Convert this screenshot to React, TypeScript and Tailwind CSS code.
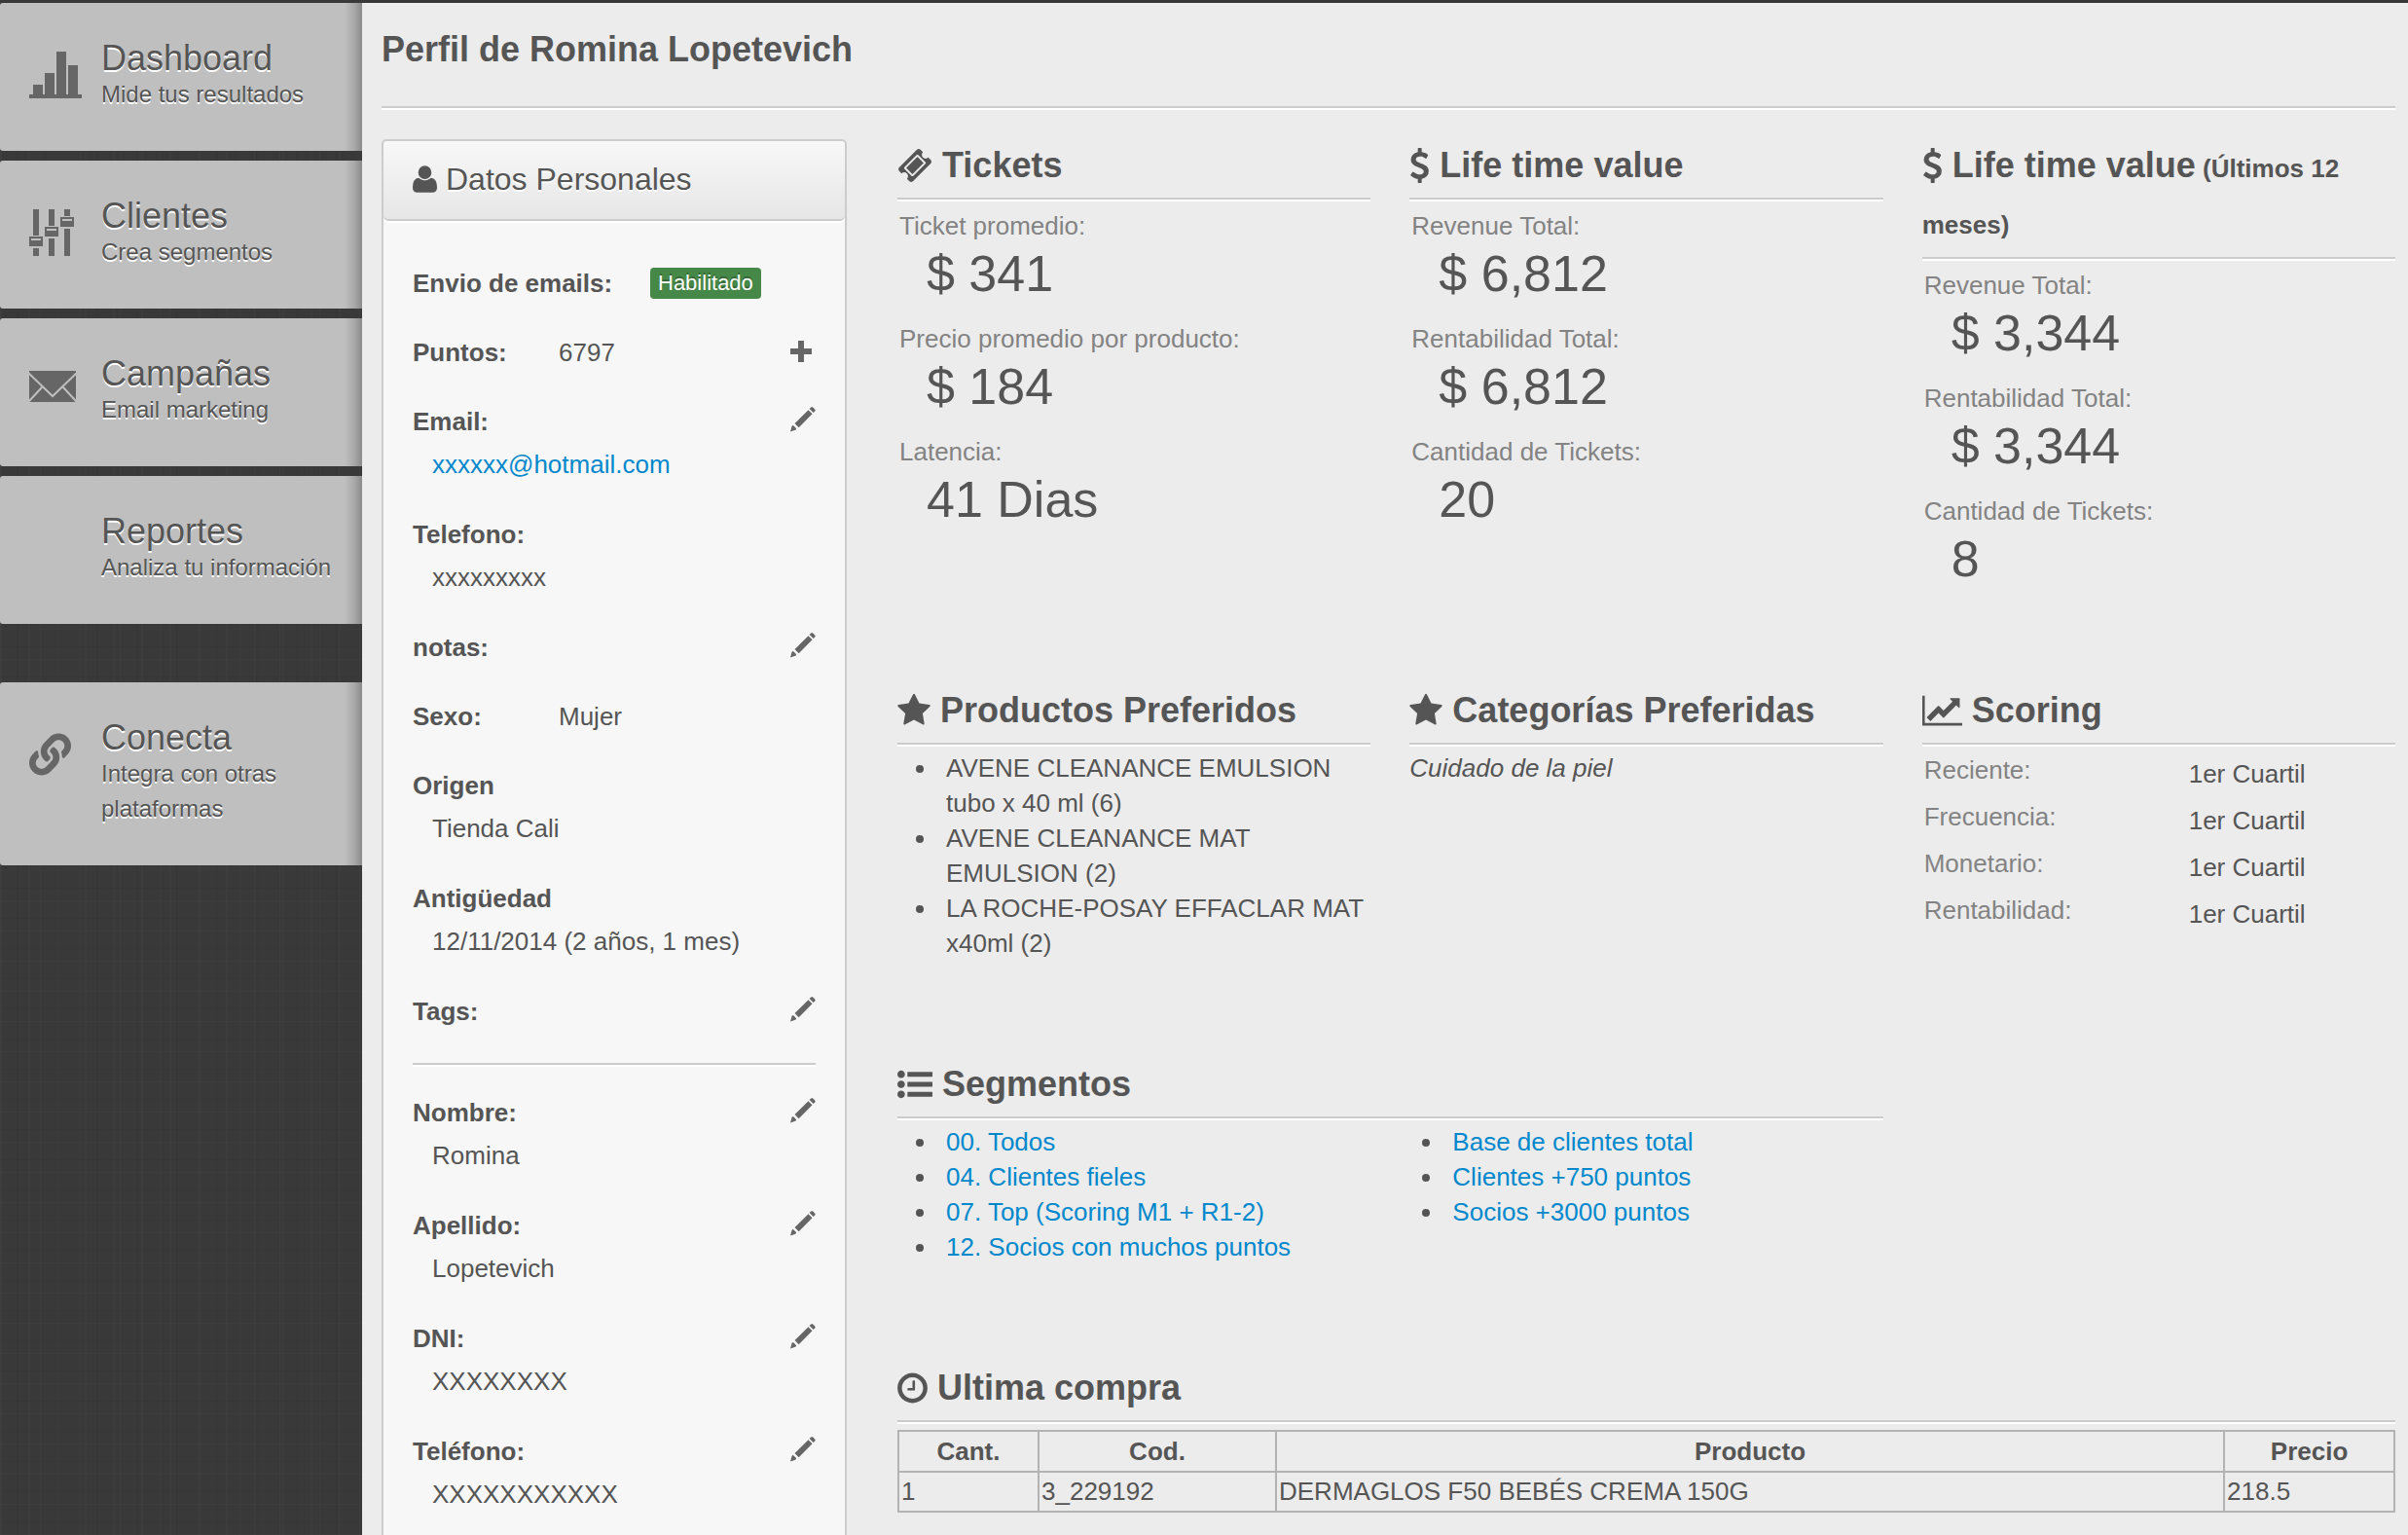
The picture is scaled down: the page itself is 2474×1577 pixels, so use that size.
import { Fragment } from "react";
import type { ReactNode } from "react";
import { FaLink } from "react-icons/fa";

const glyphs = {
  user: {
    box: "192 0 1408 1792",
    size: "w-[25px] h-8",
    d: "M1600 1405q0 120-73 189.5t-194 69.5h-874q-121 0-194-69.5t-73-189.5q0-53 3.5-103.5t14-109 26.5-108.5 43-97.5 62-81 85.5-53.5 111.5-20q9 0 42 21.5t74.5 48 108 48 133.5 21.5 133.5-21.5 108-48 74.5-48 42-21.5q61 0 111.5 20t85.5 53.5 62 81 43 97.5 26.5 108.5 14 109 3.5 103.5zm-320-893q0 159-112.5 271.5t-271.5 112.5-271.5-112.5-112.5-271.5 112.5-271.5 271.5-112.5 271.5 112.5 112.5 271.5z",
  },
  ticket: {
    box: "0 0 1792 1792",
    size: "w-9 h-9",
    d: "M1024 452l316 316-572 572-316-316zm-211 979l618-618q19-19 19-45t-19-45l-362-362q-18-18-45-18t-45 18l-618 618q-19 19-19 45t19 45l362 362q18 18 45 18t45-18zm889-637l-907 908q-37 37-90.5 37t-90.5-37l-126-126q56-56 56-136t-56-136-136-56-136 56l-125-126q-37-37-37-90.5t37-90.5l907-906q37-37 90.5-37t90.5 37l125 125q-56 56-56 136t56 136 136 56 136-56l126 125q37 37 37 90.5t-37 90.5z",
  },
  dollar: {
    box: "384 0 1024 1792",
    size: "w-[21px] h-9",
    d: "M1362 1185q0 153-99.5 263.5t-258.5 136.5v175q0 14-9 23t-23 9h-135q-13 0-22.5-9.5t-9.5-22.5v-175q-66-9-127.5-31t-101.5-44.5-74-48-46.5-37.5-17.5-18q-17-21-2-41l103-135q7-10 23-12 15-2 24 9l2 2q113 99 243 125 37 8 74 8 81 0 142.5-43t61.5-122q0-28-15-53t-33.5-42-58.5-37.5-66-32-80-32.5q-39-16-61.5-25t-61.5-26.5-62.5-31-56.5-35.5-53.5-42.5-43.5-49-35.5-58-21-66.5-8.5-78q0-138 98-242t255-134v-180q0-13 9.5-22.5t22.5-9.5h135q14 0 23 9t9 23v176q57 6 110.5 23t87 33.5 63.5 37.5 39 29 15 14q17 18 5 38l-81 146q-8 15-23 16-14 3-27-7-3-3-14.5-12t-39-26.5-58.5-32-74.5-26-85.5-11.5q-95 0-155 43t-60 111q0 26 8.5 48t29.5 41.5 39.5 33 56 31 60.5 27 70 27.5q53 20 81 31.5t76 35 75.5 42.5 62 50 53 63.5 31.5 76.5 13 94z",
  },
  star: {
    box: "64 0 1664 1792",
    size: "w-[34px] h-9",
    d: "M1728 647q0 22-26 48l-363 354 86 500q1 7 1 20 0 21-10.5 35.5t-30.5 14.5q-19 0-40-12l-449-236-449 236q-22 12-40 12-21 0-31.5-14.5t-10.5-35.5q0-6 2-20l86-500-364-354q-25-27-25-48 0-37 56-46l502-73 225-455q19-41 49-41t49 41l225 455 502 73q56 9 56 46z",
  },
  chart: {
    box: "0 0 2048 1792",
    size: "w-[41px] h-9",
    d: "M2048 1536v128h-2048v-1536h128v1408h1920zm-128-1248v435q0 21-19.5 29.5t-35.5-7.5l-121-121-633 633q-10 10-23 10t-23-10l-233-233-416 416-192-192 585-585q10-10 23-10t23 10l233 233 464-464-121-121q-16-16-7.5-35.5t29.5-19.5h435q14 0 23 9t9 23z",
  },
  list: {
    box: "0 0 1792 1792",
    size: "w-9 h-9",
    d: "M384 1408q0 80-56 136t-136 56-136-56-56-136 56-136 136-56 136 56 56 136zm0-512q0 80-56 136t-136 56-136-56-56-136 56-136 136-56 136 56 56 136zm1408 416v192q0 13-9.5 22.5t-22.5 9.5h-1216q-13 0-22.5-9.5t-9.5-22.5v-192q0-13 9.5-22.5t22.5-9.5h1216q13 0 22.5 9.5t9.5 22.5zm-1408-928q0 80-56 136t-136 56-136-56-56-136 56-136 136-56 136 56 56 136zm1408 416v192q0 13-9.5 22.5t-22.5 9.5h-1216q-13 0-22.5-9.5t-9.5-22.5v-192q0-13 9.5-22.5t22.5-9.5h1216q13 0 22.5 9.5t9.5 22.5zm0-512v192q0 13-9.5 22.5t-22.5 9.5h-1216q-13 0-22.5-9.5t-9.5-22.5v-192q0-13 9.5-22.5t22.5-9.5h1216q13 0 22.5 9.5t9.5 22.5z",
  },
  clock: {
    box: "128 0 1536 1792",
    size: "w-[31px] h-9",
    d: "M1024 544v448q0 14-9 23t-23 9h-320q-14 0-23-9t-9-23v-64q0-14 9-23t23-9h224v-352q0-14 9-23t23-9h64q14 0 23 9t9 23zm416 352q0-148-73-273t-198-198-273-73-273 73-198 198-73 273 73 273 198 198 273 73 273-73 198-198 73-273zm224 0q0 209-103 385.5t-279.5 279.5-385.5 103-385.5-103-279.5-279.5-103-385.5 103-385.5 279.5-279.5 385.5-103 385.5 103 279.5 279.5 103 385.5z",
  },
};

type GlyphName = keyof typeof glyphs;

function Glyph({ name }: { name: GlyphName }) {
  const g = glyphs[name];
  return (
    <svg viewBox={g.box} className={`${g.size} inline-block align-[-6px]`} fill="currentColor" aria-hidden="true">
      <path d={g.d} />
    </svg>
  );
}

/* ---------- Sidebar ---------- */

function BarsIcon() {
  return (
    <svg viewBox="0 0 54 48" className="h-12 w-[54px]" fill="currentColor" aria-hidden="true">
      <path d="M4 34h10v10H4zM16 22h10v22H16zM28 0h10v44H28zM40 14h10v30H40zM0 44h54v4H0z" />
    </svg>
  );
}

function SlidersIcon() {
  return (
    <svg viewBox="0 0 46 48" className="h-12 w-[46px]" fill="currentColor" aria-hidden="true">
      <path d="M4 0h6v27H4zM4 40h6v8H4zM20 0h6v17h-6zM20 30h6v18h-6zM36 0h6v7h-6zM36 20h6v28h-6z" />
      <path d="M0 28h14v10H0zM16 18h14v10H16zM32 8h14v10H32z" />
      <path d="M2 30h10v2H2zM18 20h10v2H18zM34 10h10v2H34z" fill="#bfbfbf" />
    </svg>
  );
}

function EnvelopeIcon() {
  return (
    <svg viewBox="0 0 48 48" className="h-12 w-12" aria-hidden="true">
      <path d="M0 4h48v32H0z" fill="currentColor" />
      <path d="M-1 6l25 24L49 6M-1 36l14-15M49 36L35 21" fill="none" stroke="#bfbfbf" strokeWidth="2" />
    </svg>
  );
}

function NavCard({ icon, title, text }: { icon?: ReactNode; title: string; text: string }) {
  return (
    <a
      href="#"
      className="flex rounded-l-[3px] bg-[#bfbfbf] bg-[linear-gradient(to_left,#8b8b8b,#a8a8a8_8px,#bfbfbf_18px)] pb-10 pr-[30px] pt-[38px] text-[#555]"
    >
      <span className="w-[104px] shrink-0 pl-[30px] pt-3 text-[#666]">{icon}</span>
      <span className="flex flex-col [text-shadow:0_2px_0_#fff]">
        <span className="text-4xl leading-[38px]">{title}</span>
        <span className="whitespace-nowrap text-2xl leading-9">
          {text.split("\n").map((line) => (
            <span key={line} className="block">
              {line}
            </span>
          ))}
        </span>
      </span>
    </a>
  );
}

function Sidebar() {
  return (
    <nav className="flex w-[372px] shrink-0 flex-col gap-[10px]">
      <NavCard icon={<BarsIcon />} title="Dashboard" text="Mide tus resultados" />
      <NavCard icon={<SlidersIcon />} title="Clientes" text="Crea segmentos" />
      <NavCard icon={<EnvelopeIcon />} title="Campañas" text="Email marketing" />
      <NavCard title="Reportes" text="Analiza tu información" />
      <div className="mt-[50px]">
        <NavCard
          icon={<FaLink className="h-12 w-[43px]" aria-hidden="true" />}
          title="Conecta"
          text={"Integra con otras\nplataformas"}
        />
      </div>
    </nav>
  );
}

/* ---------- Personal data ---------- */

function PencilButton({ label }: { label: string }) {
  return (
    <button type="button" aria-label={label} className="ml-auto mt-0.5 h-7 w-[26px] shrink-0 text-[#666]">
      <svg viewBox="0 0 26 26" className="h-[26px] w-[26px]" fill="currentColor" aria-hidden="true">
        <path d="M0 25.500l1.500-5.500q1-1.500 2-.5l2.200 2.200q1 1-.5 2zM4.500 17L18.500 3.200l4 4L8.700 21.200zM19.600 2l1.600-1.500q1-.9 2 0l2 2q.9 1 0 2L23.700 6z" />
      </svg>
    </button>
  );
}

function PlusButton() {
  return (
    <button type="button" aria-label="Agregar puntos" className="ml-auto mt-0.5 h-7 w-[26px] shrink-0 text-[#666]">
      <svg viewBox="0 0 26 26" className="h-[26px] w-[26px]" fill="currentColor" aria-hidden="true">
        <path d="M8 3h6v8h8v6h-8v8H8v-8H0v-6h8z" />
      </svg>
    </button>
  );
}

function InlineField({ label, wide, children, action }: { label: string; wide?: boolean; children?: ReactNode; action?: ReactNode }) {
  return (
    <div className="mb-[35px] flex">
      <dt className={wide ? "w-[244px] font-bold" : "w-[150px] font-bold"}>{label}</dt>
      <dd className="flex items-center">{children}</dd>
      {action}
    </div>
  );
}

function Field({ label, editable, children }: { label: string; editable?: boolean; children: ReactNode }) {
  return (
    <div className="mb-9">
      <div className="flex">
        <dt className="font-bold">{label}</dt>
        {editable && <PencilButton label={`Editar ${label.replace(":", "")}`} />}
      </div>
      <dd className="mt-2 pl-5">{children}</dd>
    </div>
  );
}

function PersonalData() {
  return (
    <section className="mt-0.5 w-[478px] shrink-0 self-start rounded-[5px] border-2 border-[#ccc] bg-[#f7f7f7]">
      <h2 className="flex items-center gap-[9px] rounded-[5px] border-b-2 border-[#ccc] bg-linear-to-b from-[#f8f8f8] to-[#e6e6e6] px-[30px] pb-0.5 text-[32px] leading-[78px] shadow-[0_2px_0_#fff] [text-shadow:0_2px_0_#fff]">
        <Glyph name="user" />
        Datos Personales
      </h2>
      <div className="px-[30px] pb-6 pt-[46px]">
        <dl>
          <InlineField label="Envio de emails:" wide>
            <span className="rounded-[4px] bg-[#468847] px-2 text-[22px] leading-8 text-white [text-shadow:0_-2px_0_rgba(0,0,0,0.25)]">
              Habilitado
            </span>
          </InlineField>
          <InlineField label="Puntos:" action={<PlusButton />}>
            6797
          </InlineField>
          <Field label="Email:" editable>
            <a href="mailto:xxxxxx@hotmail.com" className="text-[#08c]">
              xxxxxx@hotmail.com
            </a>
          </Field>
          <Field label="Telefono:">xxxxxxxxx</Field>
          <InlineField label="notas:" action={<PencilButton label="Editar notas" />} />
          <InlineField label="Sexo:">Mujer</InlineField>
          <Field label="Origen">Tienda Cali</Field>
          <Field label="Antigüedad">12/11/2014 (2 años, 1 mes)</Field>
          <InlineField label="Tags:" action={<PencilButton label="Editar tags" />} />
        </dl>
        <hr className="mb-[31px] border-0 border-t-2 border-[#ccc] shadow-[0_2px_0_#fff]" />
        <dl>
          <Field label="Nombre:" editable>
            Romina
          </Field>
          <Field label="Apellido:" editable>
            Lopetevich
          </Field>
          <Field label="DNI:" editable>
            XXXXXXXX
          </Field>
          <Field label="Teléfono:" editable>
            XXXXXXXXXXX
          </Field>
        </dl>
      </div>
    </section>
  );
}

/* ---------- Statistics ---------- */

function Heading({ icon, note, children }: { icon: GlyphName; note?: string; children: ReactNode }) {
  return (
    <h2 className="border-b-2 border-[#ccc] pb-1 font-bold leading-[58px] shadow-[0_2px_0_#fff]">
      {note ? (
        <>
          <span className="text-4xl leading-[58px]">
            <Glyph name={icon} /> {children}
          </span>
          {note.split(" ").map((word) => (
            <Fragment key={word}>
              {" "}
              <span>{word}</span>
            </Fragment>
          ))}
        </>
      ) : (
        <span className="block text-4xl leading-[58px]">
          <Glyph name={icon} /> {children}
        </span>
      )}
    </h2>
  );
}

function Stats({ items }: { items: [string, string][] }) {
  return (
    <dl className="pt-[9px]">
      {items.map(([label, value]) => (
        <div key={label} className="pb-[18px]">
          <dt className="pl-0.5 text-[#838383]">{label}</dt>
          <dd className="pl-[30px] text-[52px] leading-[62px]">{value}</dd>
        </div>
      ))}
    </dl>
  );
}

function BulletList({ children }: { children: ReactNode }) {
  return <ul className="list-disc pl-[42px] [&>li]:pl-2">{children}</ul>;
}

const segments = [
  ["00. Todos", "04. Clientes fieles", "07. Top (Scoring M1 + R1-2)", "12. Socios con muchos puntos"],
  ["Base de clientes total", "Clientes +750 puntos", "Socios +3000 puntos"],
];

const purchases = [{ qty: "1", code: "3_229192", product: "DERMAGLOS F50 BEBÉS CREMA 150G", price: "218.5" }];

export default function App() {
  return (
    <div className="flex h-screen overflow-hidden border-t-[3px] border-[#383838] bg-[#393939] bg-[repeating-linear-gradient(90deg,rgba(255,255,255,0.02)_0_1px,transparent_1px_17px,rgba(0,0,0,0.04)_17px_19px,transparent_19px_41px),repeating-linear-gradient(90deg,rgba(255,255,255,0.015)_0_2px,transparent_2px_29px),repeating-linear-gradient(0deg,rgba(255,255,255,0.015)_0_1px,transparent_1px_13px,rgba(0,0,0,0.04)_13px_14px,transparent_14px_31px)] font-['Liberation_Sans',Arial,sans-serif] text-[26px] leading-9 text-[#555]">
      <Sidebar />
      <main className="min-w-0 grow bg-[#ececec] pl-5 pr-[13px]">
        <h1 className="pb-[38px] pt-7 text-4xl font-bold leading-10">Perfil de Romina Lopetevich</h1>
        <hr className="border-0 border-t-2 border-[#ccc] shadow-[0_2px_0_#fff]" />
        <div className="flex gap-[52px] pt-[30px]">
          <PersonalData />
          <div className="grid min-w-0 grow grid-cols-3 content-start gap-x-10 gap-y-[78px]">
            <section>
              <Heading icon="ticket">Tickets</Heading>
              <Stats
                items={[
                  ["Ticket promedio:", "$ 341"],
                  ["Precio promedio por producto:", "$ 184"],
                  ["Latencia:", "41 Dias"],
                ]}
              />
            </section>
            <section>
              <Heading icon="dollar">Life time value</Heading>
              <Stats
                items={[
                  ["Revenue Total:", "$ 6,812"],
                  ["Rentabilidad Total:", "$ 6,812"],
                  ["Cantidad de Tickets:", "20"],
                ]}
              />
            </section>
            <section>
              <Heading icon="dollar" note="(Últimos 12 meses)">
                Life time value
              </Heading>
              <Stats
                items={[
                  ["Revenue Total:", "$ 3,344"],
                  ["Rentabilidad Total:", "$ 3,344"],
                  ["Cantidad de Tickets:", "8"],
                ]}
              />
            </section>

            <section>
              <Heading icon="star">Productos Preferidos</Heading>
              <div className="mb-5 mt-1.5">
                <BulletList>
                  <li>AVENE CLEANANCE EMULSION tubo x 40 ml (6)</li>
                  <li>AVENE CLEANANCE MAT EMULSION (2)</li>
                  <li>LA ROCHE-POSAY EFFACLAR MAT x40ml (2)</li>
                </BulletList>
              </div>
            </section>
            <section>
              <Heading icon="star">Categorías Preferidas</Heading>
              <p className="mt-1.5 italic">Cuidado de la piel</p>
            </section>
            <section>
              <Heading icon="chart">Scoring</Heading>
              <dl className="mt-2">
                {["Reciente:", "Frecuencia:", "Monetario:", "Rentabilidad:"].map((label) => (
                  <div key={label} className="flex h-12">
                    <dt className="w-[274px] pl-0.5 text-[#838383]">{label}</dt>
                    <dd className="pt-1">1er Cuartil</dd>
                  </div>
                ))}
              </dl>
            </section>

            <section className="col-span-2">
              <Heading icon="list">Segmentos</Heading>
              <div className="mb-5 mt-1.5 grid grid-cols-2 gap-x-7">
                {segments.map((column) => (
                  <BulletList key={column[0]}>
                    {column.map((name) => (
                      <li key={name}>
                        <a href="#" className="text-[#08c]">
                          {name}
                        </a>
                      </li>
                    ))}
                  </BulletList>
                ))}
              </div>
            </section>

            <section className="col-span-3">
              <Heading icon="clock">Ultima compra</Heading>
              <table className="mt-2 w-full table-fixed border-collapse border-2 border-[#b3b3b3]">
                <colgroup>
                  <col className="w-[144px]" />
                  <col className="w-[244px]" />
                  <col />
                  <col className="w-[175px]" />
                </colgroup>
                <thead>
                  <tr>
                    {["Cant.", "Cod.", "Producto", "Precio"].map((name) => (
                      <th key={name} scope="col" className="border-2 border-[#b3b3b3] px-0.5 pb-[3px] pt-[3px] leading-[34px]">
                        {name}
                      </th>
                    ))}
                  </tr>
                </thead>
                <tbody>
                  {purchases.map((row) => (
                    <tr key={row.code} className="leading-[34px]">
                      <td className="border-2 border-[#b3b3b3] px-0.5 pb-[3px] pt-0.5">{row.qty}</td>
                      <td className="border-2 border-[#b3b3b3] px-0.5 pb-[3px] pt-0.5">{row.code}</td>
                      <td className="border-2 border-[#b3b3b3] px-0.5 pb-[3px] pt-0.5">{row.product}</td>
                      <td className="border-2 border-[#b3b3b3] px-0.5 pb-[3px] pt-0.5">{row.price}</td>
                    </tr>
                  ))}
                </tbody>
              </table>
            </section>
          </div>
        </div>
      </main>
    </div>
  );
}
